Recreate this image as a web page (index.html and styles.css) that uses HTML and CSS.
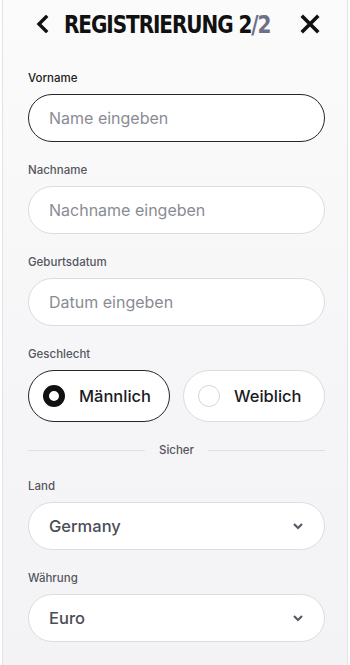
FILE: index.html
```html
<!DOCTYPE html>
<html lang="de">
<head>
<meta charset="utf-8">
<title>Registrierung</title>
<link rel="stylesheet" href="styles.css">
</head>
<body>
<div class="frame">
  <header class="header">
    <button class="icon-btn back" aria-label="Zurück">
      <svg width="14" height="18" viewBox="0 0 14 18"><path d="M11 2 L4 9 L11 16" fill="none" stroke="#111" stroke-width="3.4" stroke-linecap="square"/></svg>
    </button>
    <h1 class="title">REGISTRIERUNG 2<span class="muted">/2</span></h1>
    <button class="icon-btn close" aria-label="Schließen">
      <svg width="20" height="20" viewBox="0 0 20 20"><path d="M3 3 L17 17 M17 3 L3 17" fill="none" stroke="#111" stroke-width="3.6" stroke-linecap="square"/></svg>
    </button>
  </header>

  <form class="form">
    <div class="field">
      <label class="label active">Vorname</label>
      <div class="input focused">Name eingeben</div>
    </div>
    <div class="field">
      <label class="label">Nachname</label>
      <div class="input">Nachname eingeben</div>
    </div>
    <div class="field">
      <label class="label">Geburtsdatum</label>
      <div class="input">Datum eingeben</div>
    </div>
    <div class="field">
      <label class="label">Geschlecht</label>
      <div class="radios">
        <div class="radio selected"><span class="dot"></span>Männlich</div>
        <div class="radio"><span class="dot"></span>Weiblich</div>
      </div>
    </div>
    <div class="divider"><span>Sicher</span></div>
    <div class="field">
      <label class="label">Land</label>
      <div class="input select">Germany<svg width="12" height="8" viewBox="0 0 12 8"><path d="M2 2 L6 6 L10 2" fill="none" stroke="#5a5a66" stroke-width="2.2"/></svg></div>
    </div>
    <div class="field">
      <label class="label">Währung</label>
      <div class="input select">Euro<svg width="12" height="8" viewBox="0 0 12 8"><path d="M2 2 L6 6 L10 2" fill="none" stroke="#5a5a66" stroke-width="2.2"/></svg></div>
    </div>
    <div class="field">
      <label class="label">Adresse</label>
    </div>
  </form>
</div>
</body>
</html>
```
FILE: styles.css
```css
* { box-sizing: border-box; }
html, body { margin: 0; padding: 0; }
body {
  width: 350px;
  height: 665px;
  overflow: hidden;
  font-family: "Inter", "Liberation Sans", sans-serif;
  background: #fff;
}
.frame {
  margin: 0 2px 0 2px;
  height: 700px;
  border-left: 1px solid #e3e3e7;
  border-right: 1px solid #e3e3e7;
  background: linear-gradient(180deg, #fbfbfb 0%, #f5f5f7 60%, #f3f3f5 100%);
  padding: 0 22px 0 25px;
}
.header {
  height: 48px;
  display: flex;
  align-items: center;
  padding: 0 5px 0 7px;
}
.icon-btn {
  background: none;
  border: 0;
  padding: 0;
  display: flex;
  align-items: center;
}
.title {
  margin: 0 auto 0 15px;
  font-family: "DejaVu Sans Condensed", "DejaVu Sans", sans-serif;
  font-weight: 900;
  font-size: 25px;
  letter-spacing: -1.2px;
  color: #111;
  line-height: 1;
  transform: scaleX(0.89);
  transform-origin: left center;
}
.muted { color: #6e7086; }
.form {
  padding-top: 22px;
  display: flex;
  flex-direction: column;
  gap: 20px;
}
.field { display: flex; flex-direction: column; gap: 8px; }
.label {
  font-size: 11.5px;
  line-height: 16px;
  color: #55565f;
  font-weight: 500;
}
.label.active { color: #1c1c22; }
.input {
  height: 48px;
  border-radius: 24px;
  background: #fff;
  border: 1px solid #dcdce1;
  display: flex;
  align-items: center;
  padding: 0 20px;
  font-size: 16px;
  color: #8a8b95;
}
.input.focused { border: 1.5px solid #26262b; }
.select {
  justify-content: space-between;
  color: #4c4d57;
  font-weight: 500;
  font-size: 16.5px;
}
.radios { display: flex; gap: 13px; }
.radio {
  flex: 1;
  height: 52px;
  border-radius: 26px;
  background: #fff;
  border: 1px solid #dcdce1;
  display: flex;
  align-items: center;
  padding-left: 14px;
  gap: 14px;
  font-size: 16.5px;
  color: #1a1a1f;
  font-weight: 500;
}
.radio.selected { border: 1.5px solid #26262b; }
.dot {
  width: 22px;
  height: 22px;
  border-radius: 50%;
  border: 1px solid #d5d5da;
}
.radio.selected .dot { border: 6px solid #111; }
.divider {
  display: flex;
  align-items: center;
  gap: 14px;
  font-size: 11.5px;
  line-height: 16px;
  color: #55565f;
  font-weight: 500;
}
.divider::before, .divider::after {
  content: "";
  flex: 1;
  height: 1px;
  background: #dedee3;
}
```
